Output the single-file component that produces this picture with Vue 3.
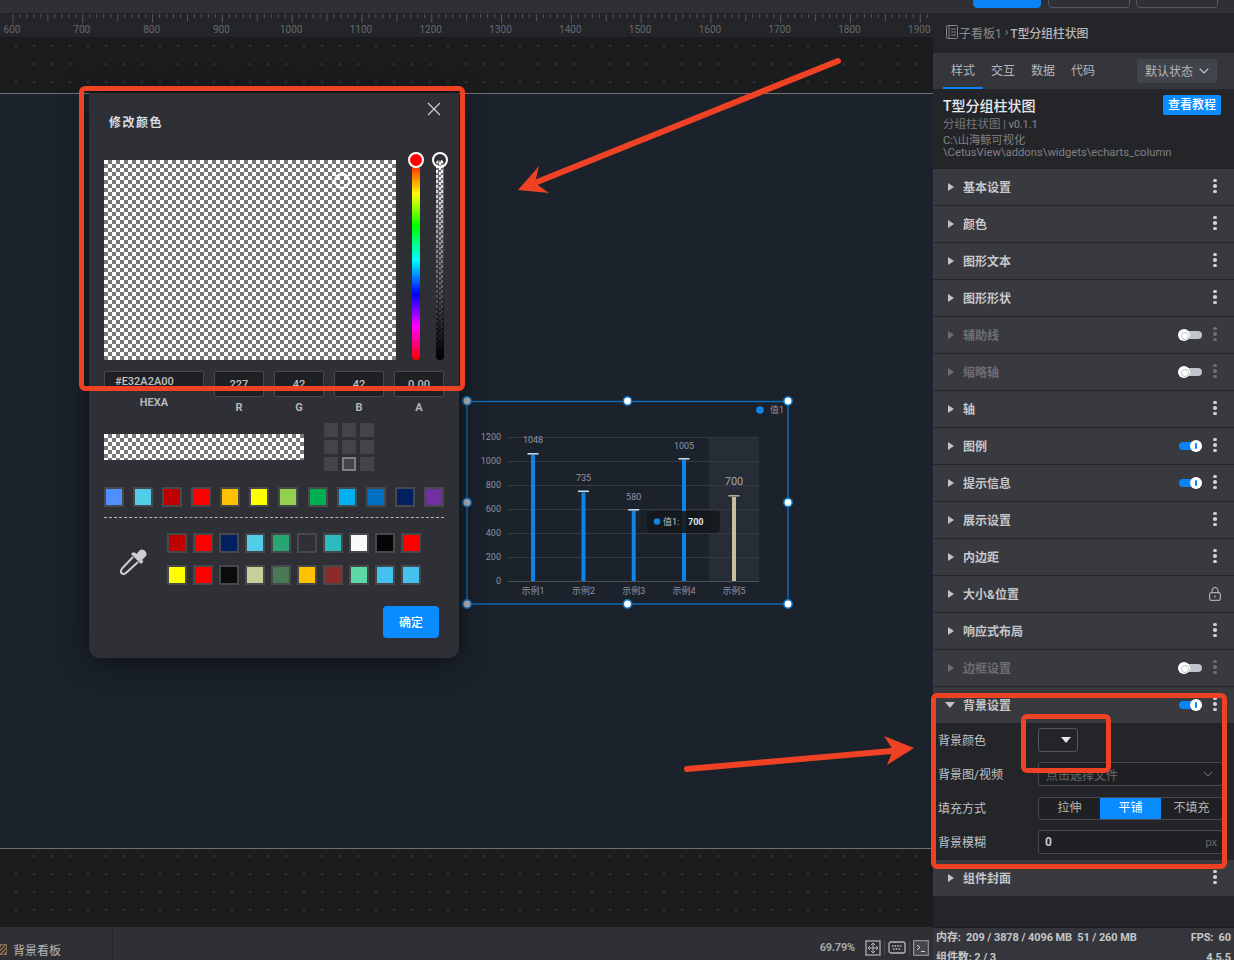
<script setup>
const rows = [
  { t: '基本设置' }, { t: '颜色' }, { t: '图形文本' }, { t: '图形形状' },
  { t: '辅助线', off: true }, { t: '缩略轴', off: true }, { t: '轴' },
  { t: '图例', on: true }, { t: '提示信息', on: true }, { t: '展示设置' },
  { t: '内边距' }, { t: '大小&位置', lock: true }, { t: '响应式布局' },
  { t: '边框设置', off: true },
]
const rulerLabels = [600,700,800,900,1000,1100,1200,1300,1400,1500,1600,1700,1800,1900]
  .map((v, i) => ({ v, x: 12 + i * 69.79 }))
const ticks = Array.from({ length: 134 }, (_, i) => ({
  x: 12.5 + i * 6.979 - 0,
  h: i % 10 === 0 ? 9 : i % 5 === 0 ? 7 : 4,
}))
const palette = ['#4f8fff','#52cde8','#bf0000','#ff0000','#ffc000','#ffff00','#92d050','#00b050','#00b0f0','#0070c0','#002060','#7030a0']
const recent = [
  ['#bf0000','#ff0000','#002060','#52cde8','#26a671','#2e3035','#2bbdbd','#fafafa','#050505','#ff0000'],
  ['#ffff00','#ff0000','#0a0c0a','#c6cf9b','#4a7a55','#ffc000','#8e2a2a','#5cd9a6','#45c1ef','#45c1ef'],
]
const yAxis = [
  { v: 1200, y: 437 }, { v: 1000, y: 461 }, { v: 800, y: 485 },
  { v: 600, y: 509 }, { v: 400, y: 533 }, { v: 200, y: 557 }, { v: 0, y: 581 },
]
const bars = [
  { x: 533, top: 455, v: 1048, vy: 443, n: '示例1' },
  { x: 583.5, top: 492.5, v: 735, vy: 481, n: '示例2' },
  { x: 633.7, top: 511, v: 580, vy: 499.5, n: '示例3' },
  { x: 684, top: 460, v: 1005, vy: 449, n: '示例4' },
  { x: 734, top: 497, v: 700, vy: 485, n: '示例5', hi: true },
]
const handles = [
  [467,401,1],[627.5,401],[788,401],
  [467,502.5,1],[788,502.5],
  [467,604,1],[627.5,604],[788,604],
]
</script>

<template>
  <div class="app">
    <div class="topbar">
      <div class="topbtn primary"></div>
      <div class="topbtn"></div>
      <div class="topbtn"></div>
    </div>
    <div class="body">
      <main class="left">
        <div class="ruler">
          <svg width="933" height="24" class="ruler-svg">
            <rect v-for="k in ticks" :key="k.x" :x="k.x" y="1" width="1" :height="k.h" fill="#55575b" />
            <text v-for="l in rulerLabels" :key="l.v" :x="l.x" y="20" text-anchor="middle" class="ruler-text">{{ l.v }}</text>
          </svg>
        </div>
        <div class="canvas">
          <div class="board"></div>
        </div>
        <div class="bottombar">
          <div class="board-tab">
            <span class="hatch"></span>
            <span>背景看板</span>
          </div>
          <div class="bottom-tools">
            <span class="zoomval">69.79%</span>
            <svg width="16" height="16" viewBox="0 0 16 16" class="tool">
              <rect x="1" y="1" width="14" height="14" fill="none" stroke="#b5b6b9" stroke-width="1.2" />
              <path d="M8 3v10M3 8h10M8 3l-2 2M8 3l2 2M8 13l-2-2M8 13l2-2M3 8l2-2M3 8l2 2M13 8l-2-2M13 8l-2 2" stroke="#b5b6b9" fill="none" />
            </svg>
            <i class="sep"></i>
            <svg width="18" height="13" viewBox="0 0 18 13" class="tool">
              <rect x="1" y="1" width="16" height="11" rx="2" fill="none" stroke="#b5b6b9" stroke-width="1.3" />
              <path d="M4 5h10M5 8h8" stroke="#b5b6b9" stroke-width="1.4" stroke-dasharray="1.6 1" />
            </svg>
            <i class="sep"></i>
            <svg width="16" height="16" viewBox="0 0 16 16" class="tool">
              <rect x=".7" y=".7" width="14.6" height="14.6" fill="#44464b" stroke="#a5a6a9" />
              <path d="M4 5l3 2.5L4 10M8 11.5h4" stroke="#d5d6d8" fill="none" />
            </svg>
          </div>
        </div>
      </main>

      <aside class="panel">
        <div class="crumb">
          <svg width="12" height="14" viewBox="0 0 12 14" class="crumb-ico">
            <rect x=".5" y=".5" width="11" height="13" rx="1" fill="none" stroke="#85868a" />
            <path d="M3 .5v13M5 4h5M5 7h5M5 10h5" stroke="#85868a" fill="none" />
          </svg>
          <span class="crumb-a">子看板1</span>
          <span class="crumb-s">›</span>
          <span class="crumb-b">T型分组柱状图</span>
        </div>
        <div class="tabs">
          <span class="tab active">样式</span>
          <span class="tab">交互</span>
          <span class="tab">数据</span>
          <span class="tab">代码</span>
          <div class="state">
            <span class="state-t">默认状态</span>
            <svg width="10" height="6" viewBox="0 0 10 6"><path d="M.7.7 5 5 9.3.7" fill="none" stroke="#c8c9cc" stroke-width="1.2" /></svg>
          </div>
        </div>
        <div class="info">
          <div class="info-head">
            <span class="info-title">T型分组柱状图</span>
            <span class="guide">查看教程</span>
          </div>
          <div class="info-sub">分组柱状图 <b>| v0.1.1</b></div>
          <div class="info-path">C:\山海鲸可视化<br />\CetusView\addons\widgets\echarts_column</div>
        </div>

        <div v-for="r in rows" :key="r.t" class="row" :class="{ dim: r.off }">
          <i class="tri"></i>
          <span class="row-t">{{ r.t }}</span>
          <span class="spacer"></span>
          <span v-if="r.on" class="toggle on"><b></b></span>
          <span v-if="r.off" class="toggle"><b></b></span>
          <svg v-if="r.lock" width="12" height="14" viewBox="0 0 12 14" class="lock">
            <rect x=".7" y="5.7" width="10.6" height="7.6" rx="1" fill="none" stroke="#c8c9cc" />
            <path d="M3 5.5V3.5a3 3 0 0 1 6 0v2M6 8.5v2" fill="none" stroke="#c8c9cc" />
          </svg>
          <span v-else class="kebab"><i></i><i></i><i></i></span>
        </div>

        <div class="row open">
          <i class="tri down"></i>
          <span class="row-t">背景设置</span>
          <span class="spacer"></span>
          <span class="toggle on"><b></b></span>
          <span class="kebab"><i></i><i></i><i></i></span>
        </div>
        <div class="form">
          <div class="f-row">
            <label>背景颜色</label>
            <div class="color-ctl"><i class="tri-d"></i></div>
          </div>
          <div class="f-row">
            <label>背景图/视频</label>
            <div class="ctl sel">
              <span class="ph">点击选择文件</span>
              <svg width="10" height="6" viewBox="0 0 10 6"><path d="M.7.7 5 5 9.3.7" fill="none" stroke="#77787c" /></svg>
            </div>
          </div>
          <div class="f-row">
            <label>填充方式</label>
            <div class="seg">
              <span>拉伸</span><span class="act">平铺</span><span>不填充</span>
            </div>
          </div>
          <div class="f-row">
            <label>背景模糊</label>
            <div class="ctl num"><b>0</b><span class="px">px</span></div>
          </div>
        </div>
        <div class="row">
          <i class="tri"></i>
          <span class="row-t">组件封面</span>
          <span class="spacer"></span>
          <span class="kebab"><i></i><i></i><i></i></span>
        </div>
        <div class="panel-fill"></div>
        <div class="status">
          <div class="st-line"><span>内存:&nbsp; 209 / 3878 / 4096 MB&nbsp; 51 / 260 MB</span><span>FPS:&nbsp; 60</span></div>
          <div class="st-line second"><span>组件数: 2 / 3</span><span>4.5.5</span></div>
        </div>
      </aside>
    </div>

    <!-- chart widget on the free canvas -->
    <svg class="chart" width="1234" height="960" viewBox="0 0 1234 960">
      <rect x="709" y="437" width="50" height="144" fill="#fff" fill-opacity=".05" />
      <line v-for="a in yAxis" :key="'l' + a.v" x1="508" x2="759" :y1="a.y + .5" :y2="a.y + .5" :stroke="a.v === 0 ? '#4d5058' : '#353941'" />
      <text v-for="a in yAxis" :key="'t' + a.v" x="501" :y="a.y + 3" text-anchor="end" class="c-txt">{{ a.v }}</text>
      <g v-for="b in bars" :key="b.n">
        <rect :x="b.x - 2" :y="b.top" width="4" :height="581 - b.top" :fill="b.hi ? '#c9bf9f' : '#0f84e6'" />
        <rect :x="b.x - 5.5" :y="b.top - 2" width="11" height="1.6" :fill="b.hi ? '#b3aa8f' : '#c6d9ea'" />
        <text :x="b.x" :y="b.vy" text-anchor="middle" :class="b.hi ? 'c-hi' : 'c-txt'">{{ b.v }}</text>
        <text :x="b.x" y="594" text-anchor="middle" class="c-txt">{{ b.n }}</text>
      </g>
      <circle cx="760" cy="410" r="3.8" fill="#0f84e6" />
      <text x="770" y="412.5" class="c-txt">值1</text>
      <rect x="647" y="511" width="73" height="22" rx="4" fill="#15181d" fill-opacity=".88" />
      <circle cx="657" cy="521.5" r="3.3" fill="#0f84e6" />
      <text x="663" y="525" class="c-tip">值1:</text>
      <text x="688" y="525" class="c-tipb">700</text>
      <rect x="467" y="401.5" width="321" height="202.5" fill="none" stroke="#0b74c8" stroke-width="1.3" />
      <circle v-for="h in handles" :key="h[0] + '-' + h[1]" :cx="h[0]" :cy="h[1]" r="4.2" :fill="h[2] ? '#b9bbbd' : '#fff'" stroke="#0b74c8" stroke-width="1.6" />
    </svg>

    <!-- colour dialog -->
    <section class="dialog">
      <svg class="close" width="14" height="14" viewBox="0 0 14 14"><path d="M1 1l12 12M13 1 1 13" stroke="#d5d6d8" stroke-width="1.1" /></svg>
      <div class="d-title">修改颜色</div>
      <div class="picker">
        <div class="sv checker">
          <i class="sv-cursor"></i>
        </div>
        <div class="hue"><i class="thumb red"></i></div>
        <div class="alpha checker-s"><i class="thumb hollow"></i></div>
      </div>
      <div class="fields">
        <div class="field hexa">
          <div class="box hexbox">#E32A2A00</div>
          <span>HEXA</span>
        </div>
        <div class="field"><div class="box">227</div><span>R</span></div>
        <div class="field"><div class="box">42</div><span>G</span></div>
        <div class="field"><div class="box">42</div><span>B</span></div>
        <div class="field"><div class="box">0.00</div><span>A</span></div>
      </div>
      <div class="preview-row">
        <div class="strip checker"></div>
        <div class="anchors">
          <i v-for="n in 9" :key="n" :class="{ sel: n === 8 }"></i>
        </div>
      </div>
      <div class="palette">
        <span v-for="(c, i) in palette" :key="i" class="sw"><i :style="{ background: c }"></i></span>
      </div>
      <div class="dash"></div>
      <div class="recent">
        <svg class="dropper" width="30" height="30" viewBox="0 0 30 30">
          <path d="M14 10 3.500 21c-2 2.500-2 4-1 5s3 1.500 5-.5L19 15" fill="none" stroke="#cdcecf" stroke-width="2" stroke-linejoin="round" />
          <path d="M12 7l10 10 2.500-2.500-1.500-1.500 3.500-3.500c3.500-3.500-2.500-9.500-6-6L17.500 7 16 5.500 13.500 5.500z" fill="#cdcecf" />
        </svg>
        <div class="recent-grid">
          <div v-for="(l, i) in recent" :key="i" class="recent-line">
            <span v-for="(c, j) in l" :key="j" class="sw"><i :style="{ background: c }"></i></span>
          </div>
        </div>
      </div>
      <div class="d-foot"><button class="ok">确定</button></div>
    </section>

    <!-- red annotations -->
    <div class="mark m1"></div>
    <div class="mark m2"></div>
    <div class="mark m3"></div>
    <svg class="arrows" width="1234" height="960" viewBox="0 0 1234 960">
      <path d="M838 61 537 182" stroke="#ef4123" stroke-width="6" stroke-linecap="round" />
      <path d="M518 190 539 166 535 183 549 193z" fill="#ef4123" />
      <path d="M687 769 892 751" stroke="#ef4123" stroke-width="6" stroke-linecap="round" />
      <path d="M914 748 884 736 893 750 887 765z" fill="#ef4123" />
    </svg>
  </div>
</template>

<style>
html, body { margin: 0; background: #1b1c1e; }
</style>

<style scoped>
* { box-sizing: border-box; }
.app {
  position: relative; width: 1234px; height: 960px; overflow: hidden;
  display: flex; flex-direction: column; background: #1b1c1e;
  font-family: Roboto, "Noto Sans CJK SC", sans-serif; color: #c8c9cc; font-size: 12px;
}
.topbar {
  height: 13px; flex: none; background: #2e3034; display: flex; justify-content: flex-end;
  gap: 6px; padding-right: 16px; align-items: flex-end;
}
.topbtn { width: 82px; height: 22px; margin-bottom: 5px; border: 1px solid #55575c; border-radius: 4px; }
.topbtn.primary { width: 68px; margin-right: 1px; background: #0a84f5; border-color: #0a84f5; }
.body { flex: 1; display: flex; min-height: 0; }
.left { width: 933px; flex: none; display: flex; flex-direction: column; }
.ruler { height: 24px; flex: none; background: #242529; }
.ruler-svg { display: block; }
.ruler-text { font: 10px Roboto, sans-serif; fill: #66686c; }
.canvas {
  flex: 1; padding-top: 56px; background-color: #1b1c1e;
  background-image: radial-gradient(circle at 1px 1px, #333539 .9px, transparent 1.1px);
  background-size: 18px 18px; background-position: 15px 8px;
}
.board { height: 756px; background: #1b222c; border-top: 1px solid #6f7174; border-bottom: 1px solid #6f7174; }
.bottombar { height: 33px; flex: none; background: #2e3034; display: flex; align-items: center; }
.board-tab {
  width: 114px; height: 100%; border-right: 1px solid #242529; padding-top: 11px;
  display: flex; align-items: center; gap: 6px; font-size: 12px; color: #b5b6b9; margin-left: -1px;
}
.hatch {
  width: 8px; height: 11px; border: 1px solid #8a6a4f;
  background: repeating-linear-gradient(135deg, #8a6a4f 0 1.5px, #333 1.5px 3px);
}
.bottom-tools { margin-left: auto; display: flex; align-items: center; padding-right: 4px; padding-top: 8px; }
.zoomval { font-size: 11px; font-weight: 700; color: #a5a6a9; margin-right: 10px; letter-spacing: -.2px; }
.tool { display: block; }
.sep { width: 1px; height: 14px; background: #44464b; margin: 0 3px; }

.panel { flex: 1; background: #242529; display: flex; flex-direction: column; min-width: 0; }
.crumb { height: 40px; flex: none; display: flex; align-items: center; padding: 0 0 2px 13px; font-size: 12px; }
.crumb-ico { margin-right: 1px; }
.crumb-a { color: #8a8b8f; }
.crumb-s { color: #8a8b8f; margin: 0 3px; }
.crumb-b { color: #b5b6b9; font-weight: 500; margin-left: -1px; letter-spacing: -.2px; }
.tabs { height: 36px; flex: none; background: #34363b; display: flex; align-items: center; padding-left: 10px; }
.tab { width: 40px; height: 36px; line-height: 36px; text-align: center; color: #b5b6b9; font-size: 12px; }
.tab.active { border-bottom: 2px solid #0a84f5; }
.state {
  margin-left: auto; margin-right: 17px; width: 80px; height: 24px; background: #42444b;
  border-radius: 2px; display: flex; align-items: center; justify-content: space-between;
  padding: 0 8px; font-size: 12px; color: #b5b6b9;
}
.state-t { margin-top: -2px; }
.info { height: 80px; flex: none; padding: 6px 13px 0 10px; }
.info-head { display: flex; justify-content: space-between; align-items: flex-start; height: 22px; }
.info-title { font-size: 14px; font-weight: 500; color: #e8e9ea; line-height: 22px; }
.guide {
  width: 58px; height: 20px; background: #0a8bff; color: #fff; border-radius: 2px;
  text-align: center; line-height: 20px; font-size: 12px; font-weight: 500;
}
.info-sub { font-size: 11.5px; line-height: 14px; color: #77787c; }
.info-sub b { font-size: 11px; font-weight: 500; letter-spacing: -.2px; }
.info-path { font-size: 11.25px; line-height: 12px; color: #808185; margin-top: 3px; }

.row {
  height: 37px; flex: none; background: #383a40; border-bottom: 1px solid #26272b;
  display: flex; align-items: center; padding: 0 18px 0 15px;
}
.row.open { height: 36px; border-bottom: 0; }
.tri { width: 0; height: 0; border-left: 6px solid #c2c3c6; border-top: 4.5px solid transparent; border-bottom: 4.5px solid transparent; margin-right: 9px; }
.tri.down {
  border-left: 5px solid transparent; border-right: 5px solid transparent;
  border-top: 6px solid #c2c3c6; border-bottom: 0; margin: 0 8px 0 -3px;
}
.row-t { font-size: 12px; font-weight: 700; color: #c6c7ca; margin-top: -2px; }
.spacer { flex: 1; }
.kebab { width: 4px; display: flex; flex-direction: column; gap: 2px; margin-top: -2px; margin-right: -1px; }
.kebab i { width: 3.6px; height: 3.6px; border-radius: 50%; background: #d0d1d4; }
.lock { margin-right: -5px; }
.dim .row-t { color: #6d6e73; }
.dim .tri { border-left-color: #6d6e73; }
.dim .kebab i { background: #6d6e73; }
.toggle { position: relative; width: 23px; height: 8px; margin-right: 11px; border-radius: 4px; background: #c0c4cc; }
.toggle b {
  position: absolute; left: -1px; top: -2px; width: 12px; height: 12px; border-radius: 50%;
  background: #fff;
}
.toggle b::after {
  content: ""; position: absolute; left: 3px; top: 3px; width: 6px; height: 6px;
  border: 1px solid #c0c4cc; border-radius: 50%;
}
.toggle.on { background: #0a84f5; }
.toggle.on b { left: 11px; }
.toggle.on b::after { left: 5px; top: 3px; width: 2px; height: 6px; border: 0; border-radius: 1px; background: #0a84f5; }

.form { height: 137px; flex: none; padding: 0 0 0 5px; display: flex; flex-direction: column; }
.f-row { height: 34px; flex: none; display: flex; align-items: center; }
.f-row label { width: 100px; flex: none; color: #c0c1c4; font-size: 12px; margin-top: -2px; }
.color-ctl {
  width: 40px; height: 24px; border: 1px solid #55575c; border-radius: 3px;
  display: flex; align-items: center; justify-content: flex-end; padding-right: 6px;
}
.tri-d { width: 0; height: 0; border-left: 5px solid transparent; border-right: 5px solid transparent; border-top: 6px solid #e5e6e8; }
.ctl { flex: 1; height: 24px; border: 1px solid #47494e; border-radius: 3px; margin-right: 11px; background: #1f2023; display: flex; align-items: center; padding: 0 7px; }
.sel { justify-content: space-between; padding-right: 9px; }
.ph { color: #66686c; font-size: 12px; }
.num b { color: #c6c7ca; font-size: 12px; margin-left: -1px; }
.px { margin-left: auto; color: #66686c; font-size: 11px; margin-right: -2px; }
.seg { flex: 1; height: 23px; margin-right: 11px; border: 1px solid #47494e; border-radius: 3px; display: flex; background: #1f2023; overflow: hidden; }
.seg span { flex: 1; text-align: center; line-height: 21px; font-size: 12px; color: #b5b6b9; }
.seg .act { background: #0a8bff; color: #fff; }
.panel-fill { flex: 1; }
.status { height: 33px; flex: none; background: #34363b; overflow: hidden; padding: 0 3px; border-top: 1px solid #1b1c1e; }
.st-line { display: flex; justify-content: space-between; font-size: 11px; line-height: 19px; font-weight: 700; color: #c6c7ca; white-space: nowrap; letter-spacing: -.1px; }
.st-line.second { margin-top: 1px; }

.chart, .arrows { position: absolute; left: 0; top: 0; pointer-events: none; }
.c-txt { font: 9px Roboto, "Noto Sans CJK SC", sans-serif; fill: #9094a0; }
.c-hi { font: 11px Roboto, sans-serif; fill: #a3a5ab; }
.c-tip { font: 9px Roboto, "Noto Sans CJK SC", sans-serif; fill: #c0c1c4; }
.c-tipb { font: 700 9px Roboto, sans-serif; fill: #e5e6e8; }

.dialog {
  position: absolute; left: 89px; top: 93px; width: 370px; height: 565px;
  background: #2e3035; border-radius: 0 0 10px 10px; padding: 0 15px;
  box-shadow: 0 4px 30px rgba(0,0,0,.55);
}
.close { position: absolute; left: 338px; top: 9px; }
.d-title { padding: 23px 0 0 5px; height: 67px; line-height: 15px; font-size: 12px; font-weight: 700; color: #dcdde0; letter-spacing: 1.5px; }
.picker { display: flex; height: 200px; }
.checker, .checker-s {
  background-color: #fff;
  background-image: conic-gradient(#777 25%, #fff 0 50%, #777 0 75%, #fff 0);
  background-size: 8px 8px;
}
.sv { width: 292px; height: 200px; position: relative; }
.sv-cursor {
  position: absolute; left: 230px; top: 13px; width: 16px; height: 16px;
  border: 2px solid #fff; border-radius: 50%;
}
.hue {
  width: 8px; margin-left: 16px; position: relative; border-radius: 4px;
  background: linear-gradient(#f00, #ff0 17%, #0f0 33%, #0ff 50%, #00f 67%, #f0f 83%, #f00);
}
.alpha {
  width: 8px; margin-left: 16px; position: relative; border-radius: 4px;
  background-image: linear-gradient(transparent, #000), conic-gradient(#777 25%, #fff 0 50%, #777 0 75%, #fff 0);
  background-size: 100% 100%, 5px 5px;
}
.thumb { position: absolute; left: -4px; top: -8px; width: 16px; height: 16px; border-radius: 50%; border: 2px solid #fff; }
.thumb.red { background: #f00; }
.fields { display: flex; margin-top: 11px; }
.field { width: 50px; margin-right: 10px; text-align: center; display: flex; flex-direction: column; font-size: 11px; font-weight: 700; color: #b5b6b9; }
.field.hexa { width: 100px; }
.field:last-child { margin-right: 0; }
.box { height: 26px; background: #1f2023; border: 1px solid #47494e; border-radius: 2px; line-height: 24px; padding-top: 1px; margin-bottom: 4px; font-weight: 500; color: #c0c1c4; }
.hexbox { height: 20px; line-height: 20px; padding: 0 0 0 10px; text-align: left; margin-bottom: 5px; }
.preview-row { display: flex; height: 47px; align-items: flex-start; margin-top: 9px; }
.strip { width: 200px; height: 26px; margin-top: 11px; }
.anchors { margin-left: 20px; display: grid; grid-template-columns: repeat(3, 14px); grid-auto-rows: 14px; column-gap: 4px; row-gap: 3px; }
.anchors i { background: #434447; }
.anchors i.sel { border: 2px solid #7f8083; }
.palette { margin-top: 17px; display: flex; justify-content: space-between; }
.sw { width: 20px; height: 20px; padding: 2px; background: #46484c; display: block; }
.sw i { display: block; width: 100%; height: 100%; }
.dash { margin-top: 10px; border-top: 1px dashed #b5b6b9; height: 0; }
.recent { display: flex; margin-top: 15px; height: 52px; }
.dropper { margin: 14px 0 0 15px; flex: none; }
.recent-grid { margin-left: 18px; display: flex; flex-direction: column; gap: 12px; }
.recent-line { display: flex; gap: 6px; }
.d-foot { display: flex; justify-content: flex-end; margin-top: 21px; padding-right: 5px; }
.ok { width: 56px; height: 32px; border: 0; border-radius: 4px; background: #0a8bff; color: #fff; font: 500 12px Roboto, "Noto Sans CJK SC", sans-serif; padding-bottom: 2px; }

.mark { position: absolute; border: 5px solid #ef4123; border-radius: 6px; }
.m1 { left: 79px; top: 86px; width: 386px; height: 305px; }
.m2 { left: 931px; top: 693px; width: 296px; height: 176px; }
.m3 { left: 1021px; top: 714px; width: 90px; height: 59px; }
</style>
